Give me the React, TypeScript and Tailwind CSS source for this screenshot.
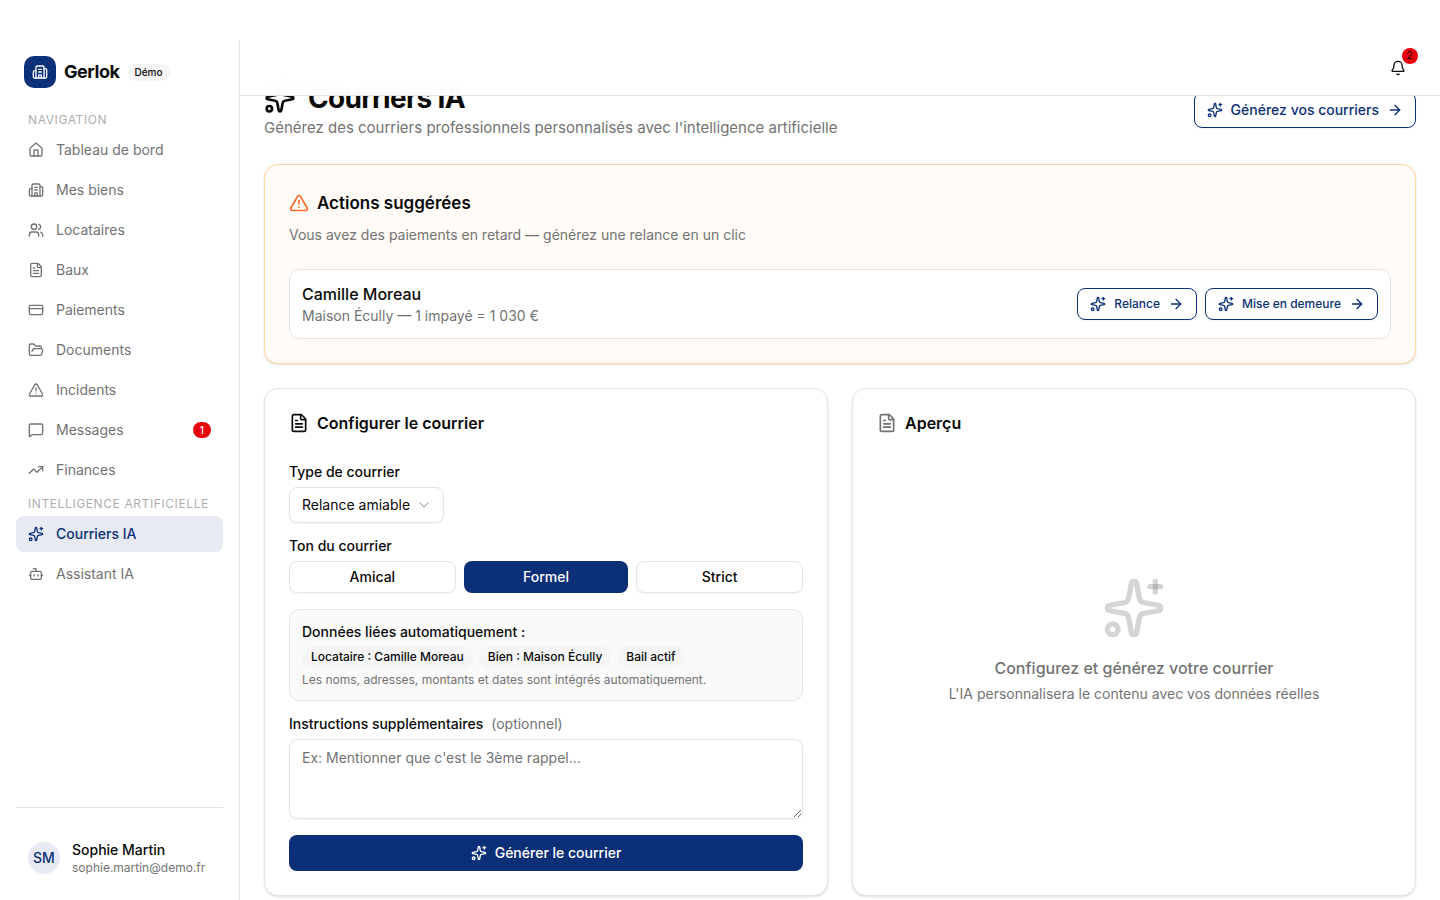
import { useState } from "react";
import {
  ArrowRight,
  Bell,
  Bot,
  Building2,
  ChevronDown,
  CreditCard,
  FileText,
  FolderOpen,
  House,
  type LucideIcon,
  MessageSquare,
  Sparkles,
  TrendingUp,
  TriangleAlert,
  Users,
} from "lucide-react";

type NavItem = {
  label: string;
  icon: LucideIcon;
  count?: number;
};

const mainNav: NavItem[] = [
  { label: "Tableau de bord", icon: House },
  { label: "Mes biens", icon: Building2 },
  { label: "Locataires", icon: Users },
  { label: "Baux", icon: FileText },
  { label: "Paiements", icon: CreditCard },
  { label: "Documents", icon: FolderOpen },
  { label: "Incidents", icon: TriangleAlert },
  { label: "Messages", icon: MessageSquare, count: 1 },
  { label: "Finances", icon: TrendingUp },
];

const aiNav: NavItem[] = [
  { label: "Courriers IA", icon: Sparkles },
  { label: "Assistant IA", icon: Bot },
];

const tones = ["Amical", "Formel", "Strict"];

const linkedData = [
  "Locataire : Camille Moreau",
  "Bien : Maison Écully",
  "Bail actif",
];

const NavSection = ({ title, items }: { title: string; items: NavItem[] }) => (
  <div className="flex flex-col gap-1">
    <p className="px-3 text-xs tracking-wider text-[#737373]/60 uppercase">
      {title}
    </p>
    {items.map(({ label, icon: Icon, count }) => (
      <a
        key={label}
        href="#"
        className={
          label === "Courriers IA"
            ? "flex h-9 items-center gap-3 rounded-lg bg-[#e7eaf2] px-3 text-sm font-medium text-[#0c3077]"
            : "flex h-9 items-center gap-3 rounded-lg px-3 text-sm text-[#737373]"
        }
      >
        <Icon className="size-4" />
        {label}
        {count && (
          <span className="ml-auto flex h-4 items-center rounded-full bg-[#e7000b] px-[7px] text-[10px] font-medium text-white">
            {count}
          </span>
        )}
      </a>
    ))}
  </div>
);

const Sidebar = () => (
  <aside className="flex w-60 shrink-0 flex-col border-r border-[#e5e5e5] px-4 pt-4">
    <div className="mb-6 flex items-center gap-2 px-2">
      <div className="flex size-8 items-center justify-center rounded-[10px] bg-[#0c3077] text-white">
        <Building2 className="size-4" />
      </div>
      <span className="text-lg font-bold tracking-tight">Gerlok</span>
      <span className="rounded-full bg-[#f5f5f5] px-[7px] text-[10px] leading-[17px] font-medium">
        Démo
      </span>
    </div>
    <nav className="flex flex-1 flex-col gap-2">
      <NavSection title="Navigation" items={mainNav} />
      <NavSection title="Intelligence artificielle" items={aiNav} />
    </nav>
    <div className="flex items-center gap-3 border-t border-[#e5e5e5] px-3 pt-8 pb-6">
      <div className="flex size-8 items-center justify-center rounded-full bg-[#e7eaf2] text-sm font-medium text-[#0c3077]">
        SM
      </div>
      <div>
        <p className="text-sm font-medium">Sophie Martin</p>
        <p className="text-xs text-[#737373]">sophie.martin@demo.fr</p>
      </div>
    </div>
  </aside>
);

const LetterButton = ({ label, small }: { label: string; small?: boolean }) => (
  <button
    className={
      small
        ? "flex h-8 items-center gap-2 rounded-lg border border-[#0c3077] bg-white px-3 text-xs font-medium text-[#0c3077] shadow-xs"
        : "flex h-9 items-center gap-2 rounded-lg border border-[#0c3077] bg-white px-3 text-sm font-medium text-[#0c3077] shadow-xs"
    }
  >
    <Sparkles className="size-4" />
    {label}
    <ArrowRight className="size-4" />
  </button>
);

const SuggestedActions = () => (
  <section className="rounded-[14px] border border-[#ffd6a7] bg-[#fffcf8] p-6 shadow-sm">
    <h2 className="flex items-center gap-2 text-[17px] leading-7 font-semibold">
      <TriangleAlert className="size-5 text-[#ff6a2b]" />
      Actions suggérées
    </h2>
    <p className="mt-2 text-sm text-[#737373]">
      Vous avez des paiements en retard — générez une relance en un clic
    </p>
    <div className="mt-6 flex items-center justify-between rounded-[10px] border border-[#e5e5e5] bg-white p-3">
      <div>
        <p className="font-medium">Camille Moreau</p>
        <p className="text-sm text-[#737373]">
          Maison Écully — 1 impayé = 1 030 €
        </p>
      </div>
      <div className="flex gap-2">
        <LetterButton label="Relance" small />
        <LetterButton label="Mise en demeure" small />
      </div>
    </div>
  </section>
);

const LetterForm = () => {
  const [type, setType] = useState("Relance amiable");
  const [tone, setTone] = useState("Formel");
  const [instructions, setInstructions] = useState("");

  return (
    <section className="rounded-[14px] border border-[#e5e5e5] bg-white p-6 shadow-sm">
      <h2 className="flex items-center gap-2 leading-5 font-semibold">
        <FileText className="size-5" />
        Configurer le courrier
      </h2>
      <form
        className="mt-8 flex flex-col gap-4"
        onSubmit={(e) => e.preventDefault()}
      >
        <div className="flex flex-col gap-2">
          <label htmlFor="type" className="text-sm leading-none font-medium">
            Type de courrier
          </label>
          <div className="relative w-fit">
            <select
              id="type"
              value={type}
              onChange={(e) => setType(e.target.value)}
              className="block h-9 w-[155px] appearance-none rounded-lg border border-[#e5e5e5] bg-white px-3 text-sm shadow-xs"
            >
              <option>Relance amiable</option>
              <option>Mise en demeure</option>
            </select>
            <ChevronDown className="pointer-events-none absolute top-2.5 right-3 size-4 text-[#737373] opacity-50" />
          </div>
        </div>

        <div className="flex flex-col gap-2">
          <p className="text-sm leading-none font-medium">Ton du courrier</p>
          <div className="flex gap-2">
            {tones.map((t) => (
              <button
                key={t}
                type="button"
                onClick={() => setTone(t)}
                className={
                  t === tone
                    ? "h-8 flex-1 rounded-lg bg-[#0c3077] px-3 text-sm font-medium text-white"
                    : "h-8 flex-1 rounded-lg border border-[#e5e5e5] bg-white px-3 text-sm font-medium shadow-xs"
                }
              >
                {t}
              </button>
            ))}
          </div>
        </div>

        <div className="flex flex-col gap-1 rounded-[10px] border border-[#e5e5e5] bg-[#fafafa] p-3">
          <p className="text-sm font-medium">Données liées automatiquement :</p>
          <div className="flex flex-wrap gap-1.5">
            {linkedData.map((item) => (
              <span
                key={item}
                className="rounded-full bg-[#f5f5f5] px-[9px] text-xs leading-[22px] font-medium"
              >
                {item}
              </span>
            ))}
          </div>
          <p className="text-xs text-[#737373]">
            Les noms, adresses, montants et dates sont intégrés automatiquement.
          </p>
        </div>

        <div className="flex flex-col gap-2">
          <label
            htmlFor="instructions"
            className="flex gap-2 text-sm leading-none font-medium"
          >
            Instructions supplémentaires
            <span className="font-normal text-[#737373]">(optionnel)</span>
          </label>
          <textarea
            id="instructions"
            value={instructions}
            onChange={(e) => setInstructions(e.target.value)}
            placeholder="Ex: Mentionner que c'est le 3ème rappel..."
            className="block h-20 w-full rounded-lg border border-[#e5e5e5] px-3 py-2 text-sm shadow-xs placeholder:text-[#737373]"
          />
        </div>

        <button className="flex h-9 items-center justify-center gap-2 rounded-lg bg-[#0c3077] text-sm font-medium text-white">
          <Sparkles className="size-4" />
          Générer le courrier
        </button>
      </form>
    </section>
  );
};

const Preview = () => (
  <section className="flex flex-col rounded-[14px] border border-[#e5e5e5] bg-white p-6 shadow-sm">
    <h2 className="flex items-center gap-2 leading-5 font-semibold">
      <FileText className="size-5 text-[#737373]" />
      Aperçu
    </h2>
    <div className="mt-8 flex flex-1 flex-col items-center justify-center pb-14 text-center text-[#737373]">
      <Sparkles className="mb-4 size-16 text-[#737373]/30" />
      <p className="font-medium">Configurez et générez votre courrier</p>
      <p className="mt-1 text-sm">
        L'IA personnalisera le contenu avec vos données réelles
      </p>
    </div>
  </section>
);

export default function App() {
  return (
    <div className="flex min-h-screen bg-white pt-10 font-['Inter',sans-serif] text-[#0a0a0a]">
      <Sidebar />
      <div className="flex min-w-0 flex-1 flex-col">
        <header className="sticky top-0 z-10 flex h-14 items-center justify-end border-b border-[#e5e5e5] bg-white/95 px-6 backdrop-blur-sm">
          <button
            aria-label="Notifications"
            className="relative flex size-9 items-center justify-center"
          >
            <Bell className="size-4" />
            <span className="absolute -top-0.5 -right-0.5 flex size-4 items-center justify-center rounded-full bg-[#e7000b] text-[10px]">
              2
            </span>
          </button>
        </header>
        <main className="-mt-4 flex flex-col gap-6 px-6 pb-1">
          <div className="flex items-center justify-between">
            <div>
              <h1 className="flex items-center gap-3 text-[28px] leading-9 font-bold tracking-tight">
                <Sparkles className="size-8" />
                Courriers IA
              </h1>
              <p className="text-[15px] leading-6 text-[#737373]">
                Générez des courriers professionnels personnalisés avec
                l'intelligence artificielle
              </p>
            </div>
            <LetterButton label="Générez vos courriers" />
          </div>
          <SuggestedActions />
          <div className="grid grid-cols-2 gap-6">
            <LetterForm />
            <Preview />
          </div>
        </main>
      </div>
    </div>
  );
}
